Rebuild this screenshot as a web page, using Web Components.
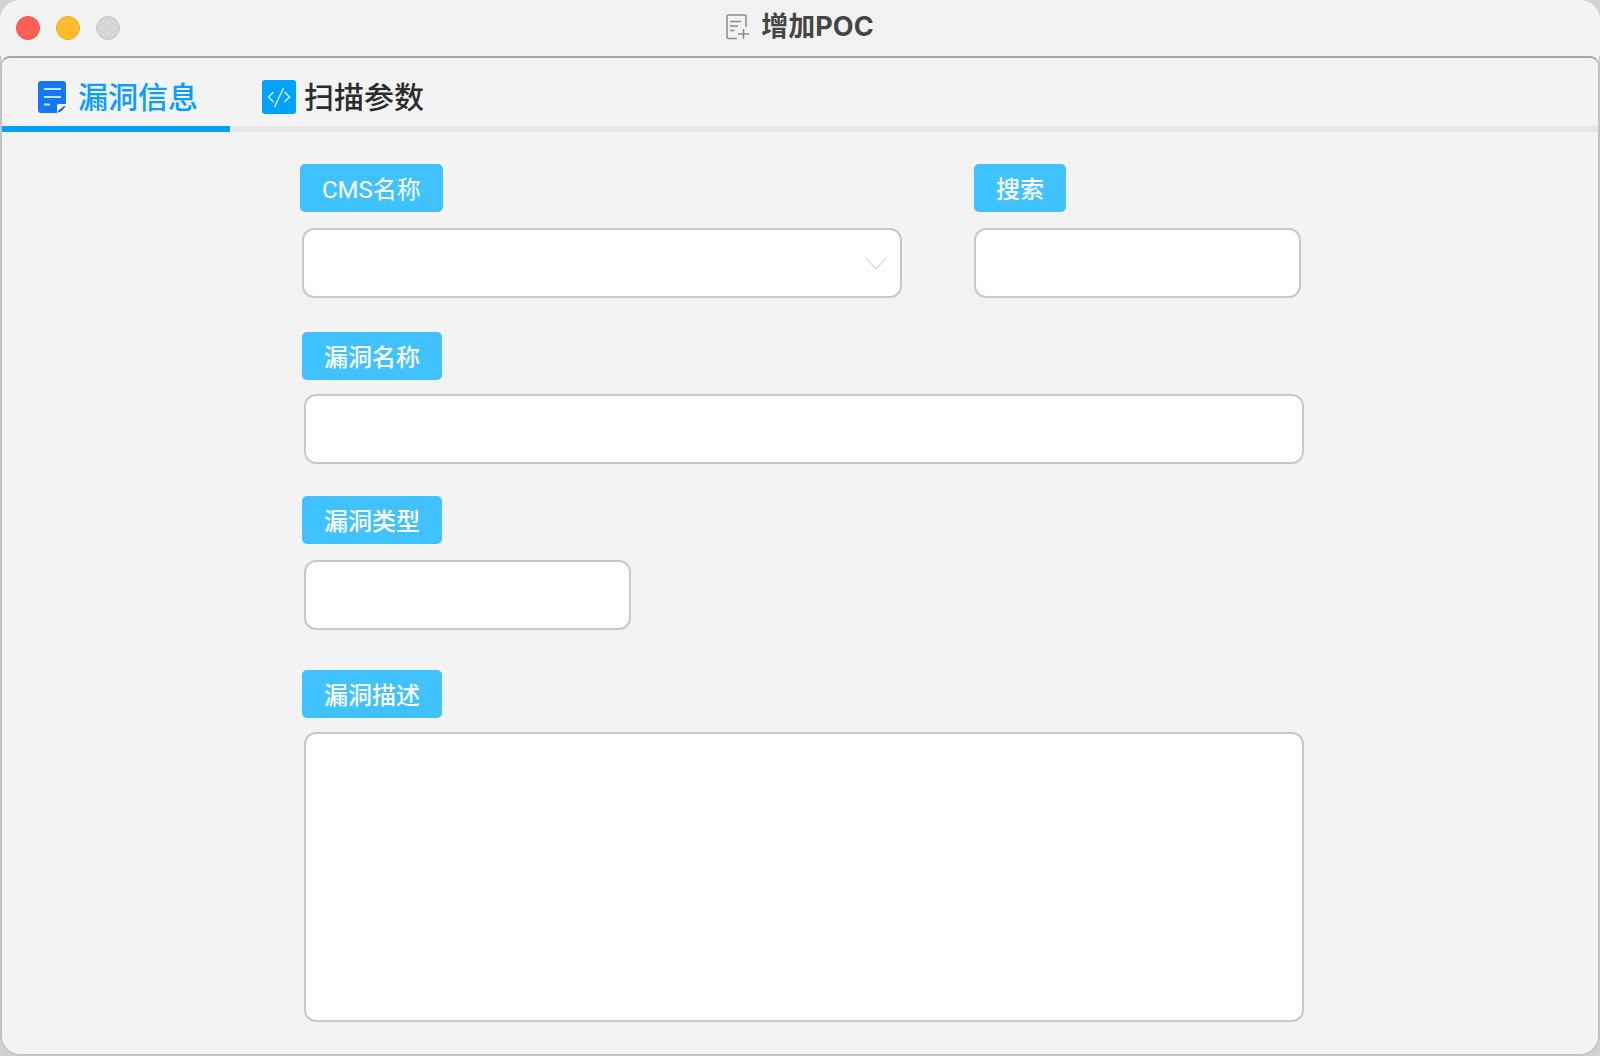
<!DOCTYPE html>
<html lang="zh-CN">
<head>
<meta charset="utf-8">
<title>增加POC</title>
<style>
html, body { margin: 0; background: #d2d2d2; }
body { font-family: Roboto, "Noto Sans CJK SC", sans-serif; color: #2c2c2c; }
</style>
</head>
<body>
<poc-window>
  <window-titlebar slot="titlebar">增加POC</window-titlebar>
  <tab-bar slot="tabs">
    <tab-item active><icon-note slot="icon"></icon-note>漏洞信息</tab-item>
    <tab-item><icon-code slot="icon"></icon-code>扫描参数</tab-item>
  </tab-bar>
  <poc-form></poc-form>
</poc-window>
<script>
const define = (name, html, init) => {
  const template = document.createElement('template');
  template.innerHTML = html;
  customElements.define(name, class extends HTMLElement {
    connectedCallback() {
      if (this.shadowRoot) return;
      const root = this.attachShadow({ mode: 'open' });
      root.append(template.content.cloneNode(true));
      if (init) init(this, root);
    }
  });
};

define('icon-note', `
<style>:host{display:block;width:28px;height:32px}svg{display:block}</style>
<svg width="28" height="32" viewBox="0 0 28 32" aria-hidden="true">
  <path d="M3 0H25Q28 0 28 3V23H20.500Q19 23 19 25V32H3Q0 32 0 29V3Q0 0 3 0Z" fill="#1677f2"/>
  <path d="M20 31.500V30L26 25H27.500Q26.500 27 24.500 29Q22.500 31 20 31.500Z" fill="#1565d8"/>
  <path d="M6 8H23M6 16H23M6 23.500H12" stroke="#c2e2ff" stroke-width="2"/>
</svg>`);

define('icon-code', `
<style>:host{display:block;width:34px;height:34px}svg{display:block}</style>
<svg width="34" height="34" viewBox="0 0 34 34" aria-hidden="true">
  <rect width="34" height="34" rx="3" fill="#00a2ff"/>
  <path d="M11.500 12L6.500 17L11.500 22M22.500 12L27.500 17L22.500 22M21.500 8L12.500 27" fill="none" stroke="#e4f6ff" stroke-width="1.400"/>
</svg>`);

define('icon-add-doc', `
<style>:host{display:block;width:23px;height:26px}svg{display:block}</style>
<svg width="23" height="26" viewBox="0 0 23 26" fill="none" stroke="#8b8b8b" stroke-width="1.500" aria-hidden="true">
  <path d="M20 13V2.500Q20 1 18.500 1H2.500Q1 1 1 2.500V22.500Q1 24.500 2.500 24.500H11"/>
  <path d="M4 7.500H15M4 12H12M4 16.500H8.500M17.500 15V25M12 20H23"/>
</svg>`);

define('window-titlebar', `
<style>
:host{display:grid;grid-template-columns:1fr auto 1fr;align-items:center;height:56px;padding:0 16px;box-sizing:border-box;background:#f2f2f2}
.lights{display:flex;gap:16px}
.lights button{width:24px;height:24px;padding:0;border-width:1px;border-style:solid;border-radius:50%}
.lights .close{background:#ff5f57;border-color:#ee544c}
.lights .min{background:#febc2e;border-color:#eeae28}
.lights .max{background:#d6d6d6;border-color:#c6c6c6}
h1{display:flex;align-items:center;gap:12px;margin:0;padding-bottom:2px;font:700 27px/34px Inter,"Noto Sans CJK SC",sans-serif;color:#454545}
</style>
<div class="lights">
  <button class="close" type="button" aria-label="关闭"></button>
  <button class="min" type="button" aria-label="最小化"></button>
  <button class="max" type="button" aria-label="缩放" disabled></button>
</div>
<h1><icon-add-doc></icon-add-doc><span><slot></slot></span></h1>`);

define('tab-item', `
<style>
:host{display:block}
button{display:flex;align-items:center;gap:8px;height:74px;padding:10px 32px 0;border:0;border-bottom:6px solid transparent;background:none;font:500 30px/40px Roboto,"Noto Sans CJK SC",sans-serif;color:#2c2c2c}
:host([active]) button{gap:12px;padding:10px 32px 0 36px;border-color:#00a0ff;color:#0c9dff}
span{padding-top:2px;white-space:nowrap}
</style>
<button type="button" role="tab"><slot name="icon"></slot><span><slot></slot></span></button>`,
(host, root) => root.querySelector('button').setAttribute('aria-selected', host.hasAttribute('active')));

define('tab-bar', `
<style>
:host{display:block;background:linear-gradient(#e6e6e8,#e6e6e8) bottom/100% 6px no-repeat}
div{display:flex}
</style>
<div role="tablist"><slot></slot></div>`);

define('form-field', `
<style>
:host{display:flex;flex-direction:column;align-items:flex-start;--indent:2px}
:host([flush]){--indent:0px}
label{box-sizing:border-box;height:48px;padding:2px 22px 0;border-radius:5px;background:#40c2ff;color:#fff;font:500 24px/48px Roboto,"Noto Sans CJK SC",sans-serif}
:host([light]) label{font-weight:400}
.box{display:grid;align-self:stretch;margin:var(--gap,16px) 0 0 var(--indent)}
.box>*{grid-area:1/1}
input,select,textarea{box-sizing:border-box;width:100%;height:70px;margin:0;padding:0 20px;border:2px solid #c8c8c8;border-radius:12px;background:#fff;font:24px/32px Roboto,"Noto Sans CJK SC",sans-serif;color:#2c2c2c;appearance:none;outline:0}
textarea{display:block;height:290px;padding:16px 20px;resize:none}
svg{place-self:center end;margin-right:15px;pointer-events:none}
</style>
<label for="control"></label><div class="box"></div>`,
(host, root) => {
  const kind = host.getAttribute('kind') || 'input';
  root.querySelector('label').textContent = host.getAttribute('label');
  const control = document.createElement(kind);
  control.id = 'control';
  const box = root.querySelector('.box');
  box.append(control);
  if (kind === 'select') {
    control.append(new Option(''));
    box.insertAdjacentHTML('beforeend', '<svg width="22" height="13" viewBox="0 0 22 13" aria-hidden="true"><path d="M1 1L11 12L21 1" fill="none" stroke="#dcdcdc" stroke-width="1.500"/></svg>');
  }
});

define('poc-form', `
<style>
:host{display:block}
form{display:flex;flex-direction:column;padding:32px 294px 32px 298px}
.row{display:grid;grid-template-columns:1fr 327px;gap:72px;margin:0 3px 34px 0}
.name,.type,.desc{margin-left:2px}
.name,.desc{--gap:14px}
.name{margin-bottom:32px}
.type{margin-bottom:40px;width:329px}
</style>
<form>
  <div class="row">
    <form-field light kind="select" label="CMS名称"></form-field>
    <form-field flush label="搜索"></form-field>
  </div>
  <form-field class="name" label="漏洞名称"></form-field>
  <form-field class="type" label="漏洞类型"></form-field>
  <form-field class="desc" kind="textarea" label="漏洞描述"></form-field>
</form>`);

define('poc-window', `
<style>
:host{display:flex;flex-direction:column;box-sizing:border-box;min-height:100vh;border-radius:20px;overflow:hidden;background:#f2f2f2;box-shadow:inset 0 0 0 1px #c4c4c4}
main{flex:1;border:2px solid #c4c4c4;border-top-color:#a8a8a8;border-radius:10px 10px 20px 20px;background:#f3f3f3}
</style>
<slot name="titlebar"></slot>
<main><slot name="tabs"></slot><slot></slot></main>`);
</script>
</body>
</html>
